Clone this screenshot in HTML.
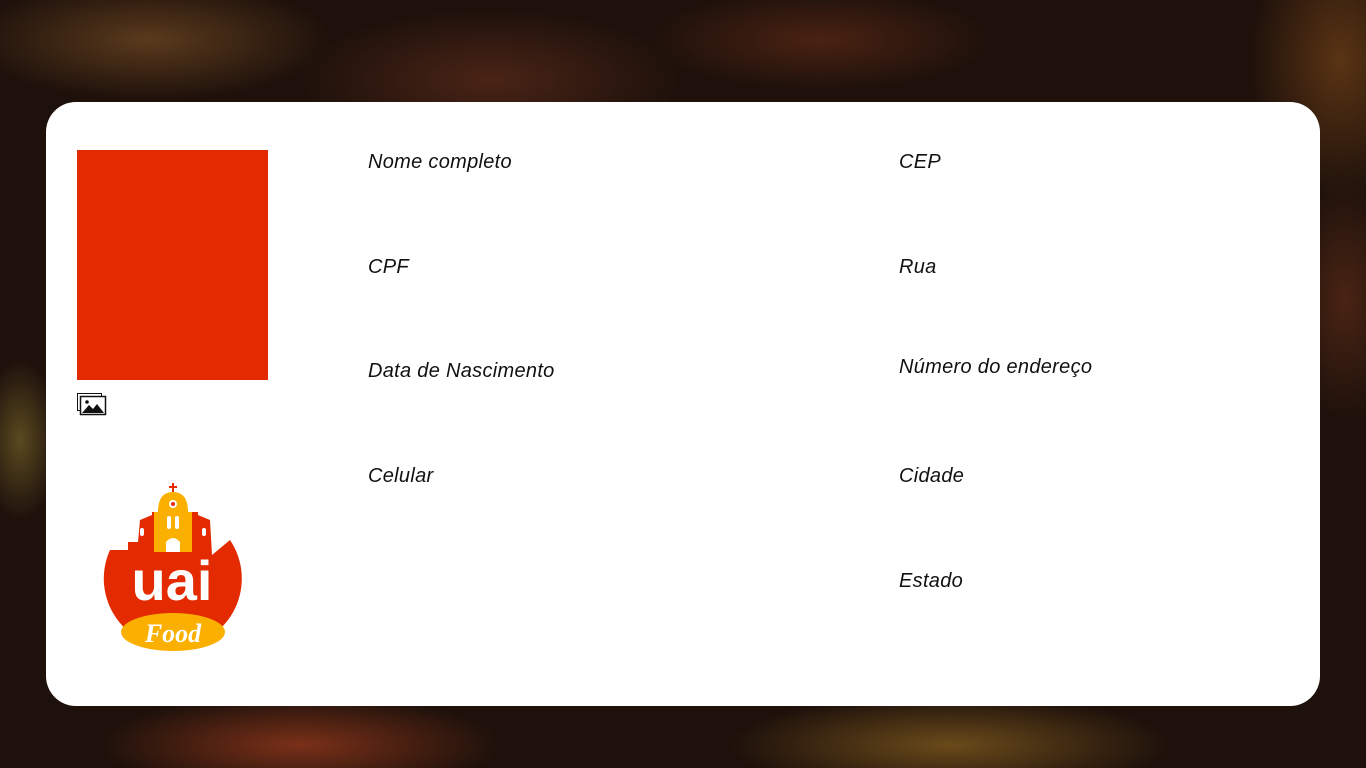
<!DOCTYPE html>
<html><head><meta charset="utf-8"><style>
html,body{margin:0;padding:0;width:1366px;height:768px;overflow:hidden}
body{position:relative;background:#1a0e08;
background:
radial-gradient(ellipse 180px 60px at 150px 40px,#5a3a1c,transparent),
radial-gradient(ellipse 190px 70px at 490px 80px,#4a2416,transparent),
radial-gradient(ellipse 170px 50px at 820px 40px,#4a2212,transparent),
radial-gradient(ellipse 90px 140px at 1340px 60px,#5a3414,transparent),
radial-gradient(ellipse 200px 50px at 300px 745px,#7a3018,transparent),
radial-gradient(ellipse 220px 50px at 950px 745px,#6a4a1a,transparent),
radial-gradient(ellipse 60px 120px at 1345px 300px,#4a2414,transparent),
radial-gradient(ellipse 40px 80px at 20px 440px,#5a4a20,transparent),
#1e110b;}
.card{position:absolute;left:46px;top:102px;width:1274px;height:604px;background:#fff;border-radius:30px}
.red{position:absolute;left:77px;top:150px;width:191px;height:230px;background:#e32a00}
.lbl{position:absolute;font-family:"Liberation Sans",sans-serif;font-style:italic;font-size:20px;letter-spacing:0.3px;color:#111;line-height:22px}
</style></head><body>
<div class="card"></div>
<div class="red"></div>
<svg style="position:absolute;left:77px;top:393px" width="30" height="23" viewBox="0 0 30 23">
<rect x="0.5" y="0.5" width="24" height="17" fill="#fff" stroke="#111"/>
<rect x="3.5" y="3.5" width="25" height="18" fill="#fff" stroke="#111" stroke-width="1.5"/>
<circle cx="10" cy="9" r="1.8" fill="#111"/>
<path d="M5 20 L12 12 L16 16 L20 11 L27 20Z" fill="#111"/>
</svg>
<svg style="position:absolute;left:100px;top:480px" width="146" height="175" viewBox="0 0 146 175">
<path d="M10 70 A69 69 0 1 0 130 60 L112 75 L110 40 L98 35 L98 32 L52 32 L52 35 L40 40 L38 62 L28 62 L28 70 Z" fill="#e32a00"/>
<path d="M58 32 Q58 12 73 12 Q88 12 88 32 L92 32 L92 72 L54 72 L54 32 Z" fill="#fbb000"/>
<rect x="72" y="3" width="2" height="9" fill="#e32a00"/><rect x="69" y="6" width="8" height="2" fill="#e32a00"/>
<circle cx="73" cy="24" r="4" fill="#fff"/><circle cx="73" cy="24" r="2" fill="#e32a00"/>
<rect x="67" y="36" width="4" height="13" rx="2" fill="#fff"/><rect x="75" y="36" width="4" height="13" rx="2" fill="#fff"/>
<path d="M66 72 L66 62 Q73 54 80 62 L80 72Z" fill="#fff"/>
<rect x="40" y="48" width="4" height="8" rx="2" fill="#fff"/><rect x="102" y="48" width="4" height="8" rx="2" fill="#fff"/>
<text x="72" y="120" text-anchor="middle" font-family="Liberation Sans,sans-serif" font-weight="bold" font-size="56" fill="#fff">uai</text>
<ellipse cx="73" cy="152" rx="52" ry="19" fill="#fbb000"/>
<text x="73" y="162" text-anchor="middle" font-family="Liberation Serif,serif" font-style="italic" font-weight="bold" font-size="26" fill="#fff">Food</text>
</svg>
<div class="lbl" style="left:368px;top:151px">Nome completo</div>
<div class="lbl" style="left:368px;top:256px">CPF</div>
<div class="lbl" style="left:368px;top:360px">Data de Nascimento</div>
<div class="lbl" style="left:368px;top:465px">Celular</div>
<div class="lbl" style="left:899px;top:151px">CEP</div>
<div class="lbl" style="left:899px;top:256px">Rua</div>
<div class="lbl" style="left:899px;top:356px">Número do endereço</div>
<div class="lbl" style="left:899px;top:465px">Cidade</div>
<div class="lbl" style="left:899px;top:570px">Estado</div>
</body></html>
